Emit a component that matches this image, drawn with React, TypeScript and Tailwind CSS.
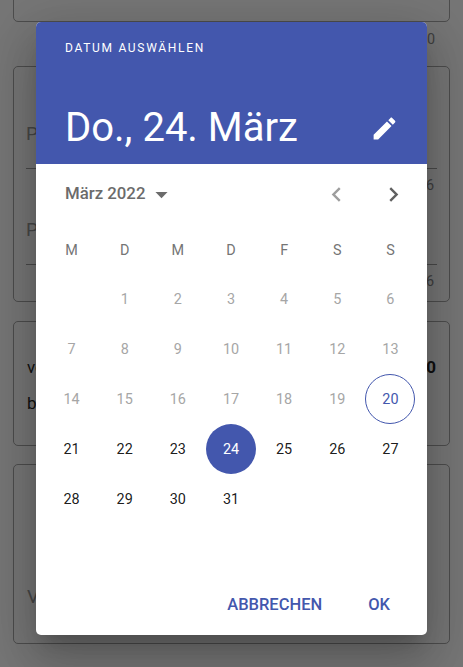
const weekDays = ["M", "D", "M", "D", "F", "S", "S"];

// Mon-first grid for March 2022, the 1st is a Tuesday
const days: (number | null)[] = [null, ...Array.from({ length: 31 }, (_, i) => i + 1)];

function Counter({ value }: { value: string }) {
  return <span className="text-[14.4px] text-[#3f3f3f]">{value}</span>;
}

function Field({ label, count }: { label: string; count: string }) {
  return (
    <div className="flex flex-col">
      <div className="h-[24px] text-[19px] leading-[24px] text-[#474747]">{label}</div>
      <div className="mt-[22px] h-px bg-[#4a4a4a]" />
      <div className="mt-[8px] flex justify-end pr-[3px] leading-[18px]">
        <Counter value={count} />
      </div>
    </div>
  );
}

function Background() {
  return (
    <div className="flex h-[667px] flex-col overflow-hidden bg-[#767676] px-[13px]">
      <div className="-mt-[38px] h-[60px] shrink-0 rounded-[5px] border border-[#4d4d4d]" />
      <div className="flex h-[44px] shrink-0 justify-end pr-[15px] pt-[9px] leading-[18px]">
        <Counter value="0" />
      </div>
      <div className="flex h-[236px] shrink-0 flex-col gap-[23px] rounded-[5px] border border-[#4d4d4d] px-[12px] pt-[55px]">
        <Field label="Preis" count="6" />
        <Field label="Preis" count="6" />
      </div>
      <div className="mt-[19px] flex h-[125px] shrink-0 flex-col gap-[12px] rounded-[5px] border border-[#4d4d4d] px-[13px] pt-[33px] text-[17px] leading-[24px] text-[#111]">
        <div className="flex justify-between">
          <span>von</span>
          <span className="font-bold">0</span>
        </div>
        <div>bis</div>
      </div>
      <div className="mt-[18px] h-[180px] shrink-0 rounded-[5px] border border-[#4d4d4d] px-[13px] pt-[120px] text-[19px] leading-[24px] text-[#474747]">
        Verkauf
      </div>
    </div>
  );
}

function DayCell({ day }: { day: number | null }) {
  if (day === null) return <div className="h-[50px]" />;
  let style = "text-black/90";
  if (day < 20) style = "text-[#a6a6a6]";
  if (day === 20) style = "border border-[#4357ad] text-[#4357ad]";
  if (day === 24) style = "bg-[#4357ad] text-white";
  return (
    <div className="flex justify-center">
      <div className={`flex h-[50px] w-[50px] items-center justify-center rounded-full pt-[2px] text-[14.4px] ${style}`}>{day}</div>
    </div>
  );
}

function Icon({ d, className }: { d: string; className: string }) {
  return (
    <svg viewBox="0 0 24 24" className={`h-[29px] w-[29px] fill-current ${className}`}>
      <path d={d} />
    </svg>
  );
}

export default function App() {
  return (
    <div className="relative h-[667px] w-[463px] overflow-hidden font-['Roboto',sans-serif]">
      <Background />
      <div className="absolute left-[36px] top-[22px] flex h-[613px] w-[391px] flex-col overflow-hidden rounded-[5px] bg-white shadow-[0_13px_18px_-8px_rgba(0,0,0,0.2),0_29px_46px_4px_rgba(0,0,0,0.14),0_11px_55px_10px_rgba(0,0,0,0.12)]">
        <div className="flex h-[142px] shrink-0 flex-col justify-between bg-[#4357ad] pb-[12px] pl-[29px] pr-[28px] pt-[18px] text-white">
          <div className="text-[12px] leading-[17px] tracking-[1.7px]">DATUM AUSWÄHLEN</div>
          <div className="flex items-center justify-between">
            <div className="text-[40px] leading-[48px]">Do., 24. März</div>
            <Icon className="" d="M3 17.25V21h3.75L17.81 9.94l-3.75-3.75L3 17.25zM20.71 7.04c.39-.39.39-1.02 0-1.41l-2.34-2.34c-.39-.39-1.02-.39-1.41 0l-1.83 1.83 3.75 3.75 1.83-1.83z" />
          </div>
        </div>

        <div className="flex h-[60px] shrink-0 items-center justify-between pl-[29px] pr-[19px]">
          <div className="flex items-center text-[#6b6b6b]">
            <span className="text-[16.8px] font-medium">März 2022</span>
            <Icon className="ml-[2px]" d="M7 10l5 5 5-5z" />
          </div>
          <div className="flex items-center gap-[28px]">
            <Icon className="text-[#9e9e9e]" d="M15.41 16.59L10.83 12l4.58-4.59L14 6l-6 6 6 6 1.41-1.41z" />
            <Icon className="text-[#616161]" d="M8.59 16.59L13.17 12 8.59 7.41 10 6l6 6-6 6-1.41-1.41z" />
          </div>
        </div>

        <div className="grid shrink-0 grid-cols-7 pl-[9px] pr-[10px]">
          {weekDays.map((d, i) => (
            <div key={i} className="flex h-[50px] items-center justify-center pt-[3px] text-[14.4px] text-[#757575]">
              {d}
            </div>
          ))}
        </div>

        <div className="grid shrink-0 grid-cols-7 pl-[9px] pr-[10px]">
          {days.map((d, i) => (
            <DayCell key={i} day={d} />
          ))}
        </div>

        <div className="mt-auto flex h-[60px] shrink-0 items-center justify-end gap-[46px] pr-[37px] text-[16.5px] font-medium text-[#4357ad]">
          <span>ABBRECHEN</span>
          <span>OK</span>
        </div>
      </div>
    </div>
  );
}
